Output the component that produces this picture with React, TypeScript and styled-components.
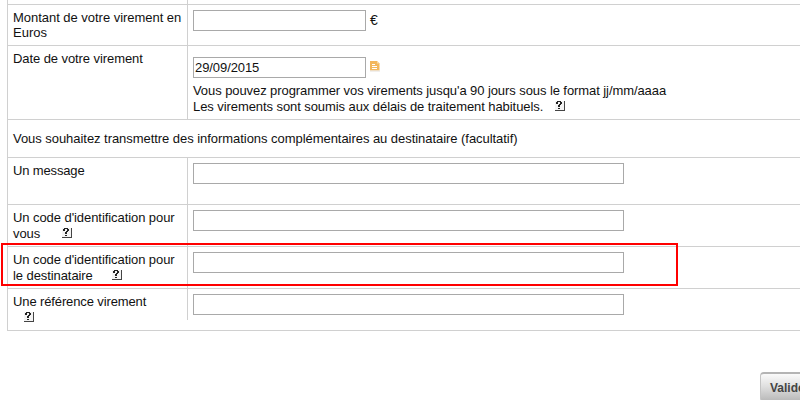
import React from 'react';
import styled, { createGlobalStyle } from 'styled-components';

const GlobalStyle = createGlobalStyle`
  * { box-sizing: border-box; }
  html, body { margin: 0; background: #fff; overflow: hidden; }
  body { font: 13px/15px "Liberation Sans", Arial, sans-serif; color: #111; }
`;

const Page = styled.main`
  width: 800px;
  height: 400px;
  overflow: hidden;
  display: flex;
  flex-direction: column;
  position: relative;
`;

const Form = styled.form`
  margin-left: 7px;
  height: 331px;
  flex: none;
  border-left: 1px solid #d0d0d0;
  border-bottom: 1px solid #d0d0d0;
`;

const Row = styled.div<{ $h: number; $first?: boolean }>`
  display: flex;
  height: ${p => p.$h}px;
  border-top: ${p => (p.$first ? '0' : '1px solid #d0d0d0')};
`;

const Label = styled.div<{ $h?: number }>`
  width: 180px;
  flex: none;
  height: ${p => (p.$h ? `${p.$h}px` : '100%')};
  padding: 5px 0 0 5px;
  border-right: 1px solid #d0d0d0;
  white-space: nowrap;
`;

const Line = styled.div<{ $h?: number; $lh?: number; $spacing?: number }>`
  height: ${p => p.$h ?? 15}px;
  line-height: ${p => p.$lh ?? p.$h ?? 15}px;
  display: flex;
  white-space: pre;
  letter-spacing: ${p => p.$spacing ?? 0}px;
`;

const Field = styled.div<{ $top?: number }>`
  padding: ${p => p.$top ?? 5}px 0 0 5px;
`;

const Control = styled.div`
  display: flex;
  height: 21px;
`;

const Input = styled.input<{ $w: number }>`
  display: block;
  width: ${p => p.$w}px;
  height: 21px;
  padding: 0 1px;
  border: 1px solid #a9a9a9;
  border-radius: 0;
  background: #fff;
  font: inherit;
  letter-spacing: -0.08px;
  color: #111;
  outline: 0;
`;

const Unit = styled.span`
  margin: 3px 0 0 4px;
  font-size: 14px;
`;

const Hint = styled.div`
  padding-top: 5px;
`;

const Notice = styled.div`
  padding: 11px 0 0 5px;
  letter-spacing: -0.047px;
`;

const HelpSvg = styled.svg<{ $gap: number; $top: number }>`
  flex: none;
  margin: ${p => p.$top}px 0 0 ${p => p.$gap}px;
`;

const NoteSvg = styled.svg`
  margin: 4px 0 0 4px;
`;

const Highlight = styled.div`
  position: absolute;
  left: 1px;
  top: 243px;
  width: 677px;
  height: 43px;
  border: 2px solid #f00;
`;

const Actions = styled.div`
  display: flex;
  padding: 41px 0 0 760px;
`;

const Submit = styled.button`
  flex: none;
  width: 72px;
  height: 30px;
  padding: 0 0 0 9px;
  text-align: left;
  border: 1px solid #c4c4c4;
  border-top: 2px solid #b4b4b4;
  border-radius: 4px;
  background: linear-gradient(#fafafa, #e0e0e0 45%, #b8b8b8);
  font: bold 12px/26px "Liberation Sans", Arial, sans-serif;
  color: #444;
`;

const Help = ({ gap, top = 3 }: { gap: number; top?: number }) => (
  <HelpSvg $gap={gap} $top={top} width="10" height="10" viewBox="0 0 10 10" shapeRendering="crispEdges">
    <path d="M0 0h9v9H0z" fill="#f4f4f4" />
    <path d="M9 0h1v10H0V9h9z" fill="#444" />
    <path d="M2 0h4v1H2zM1 1h2v2H1zM5 1h2v2H5zM4 3h2v1H4zM3 4h2v2H3zM3 7h2v1H3z" fill="#222" />
  </HelpSvg>
);

const Note = () => (
  <NoteSvg width="10" height="11" viewBox="0 0 10 11">
    <path d="M0 0h7l2.5 2.5V9.500H0z" fill="#f3b75c" />
    <path d="M7 0v2.500h2.500z" fill="#f9d9a3" />
    <path d="M2 3.500h3M2 5.500h5M2 7.500h5" stroke="#fff" />
    <path d="M0 10h10" stroke="#e4e0dc" />
  </NoteSvg>
);

export default function App() {
  return (
    <>
      <GlobalStyle />
      <Page>
        <Form>
          <Row $h={4} $first><Label /></Row>
          <Row $h={41}>
            <Label><Line $spacing={-0.03}>Montant de votre virement en</Line><Line>Euros</Line></Label>
            <Field><Control><Input $w={173} /><Unit>€</Unit></Control></Field>
          </Row>
          <Row $h={74}>
            <Label><Line $spacing={-0.08}>Date de votre virement</Line></Label>
            <Field $top={11}>
              <Control><Input $w={173} defaultValue="29/09/2015" /><Note /></Control>
              <Hint>
                <Line $h={16} $spacing={-0.08}>Vous pouvez programmer vos virements jusqu'a 90 jours sous le format jj/mm/aaaa</Line>
                <Line $h={16} $spacing={-0.075}>Les virements sont soumis aux délais de traitement habituels.<Help gap={12} top={2} /></Line>
              </Hint>
            </Field>
          </Row>
          <Row $h={38}>
            <Notice>Vous souhaitez transmettre des informations complémentaires au destinataire (facultatif)</Notice>
          </Row>
          <Row $h={47}>
            <Label><Line $spacing={-0.15}>Un message</Line></Label>
            <Field><Input $w={431} /></Field>
          </Row>
          <Row $h={42}>
            <Label><Line $spacing={-0.07}>Un code d'identification pour</Line><Line $h={16} $lh={18} $spacing={-0.08}>vous<Help gap={22} /></Line></Label>
            <Field><Input $w={431} /></Field>
          </Row>
          <Row $h={42}>
            <Label><Line $spacing={-0.07}>Un code d'identification pour</Line><Line $h={16} $lh={18} $spacing={-0.08}>le destinataire<Help gap={19} /></Line></Label>
            <Field><Input $w={431} /></Field>
          </Row>
          <Row $h={42}>
            <Label $h={31}><Line $spacing={-0.12}>Une référence virement</Line><Line $h={16}><Help gap={11} /></Line></Label>
            <Field><Input $w={431} /></Field>
          </Row>
        </Form>
        <Actions><Submit type="button">Valider</Submit></Actions>
        <Highlight />
      </Page>
    </>
  );
}
